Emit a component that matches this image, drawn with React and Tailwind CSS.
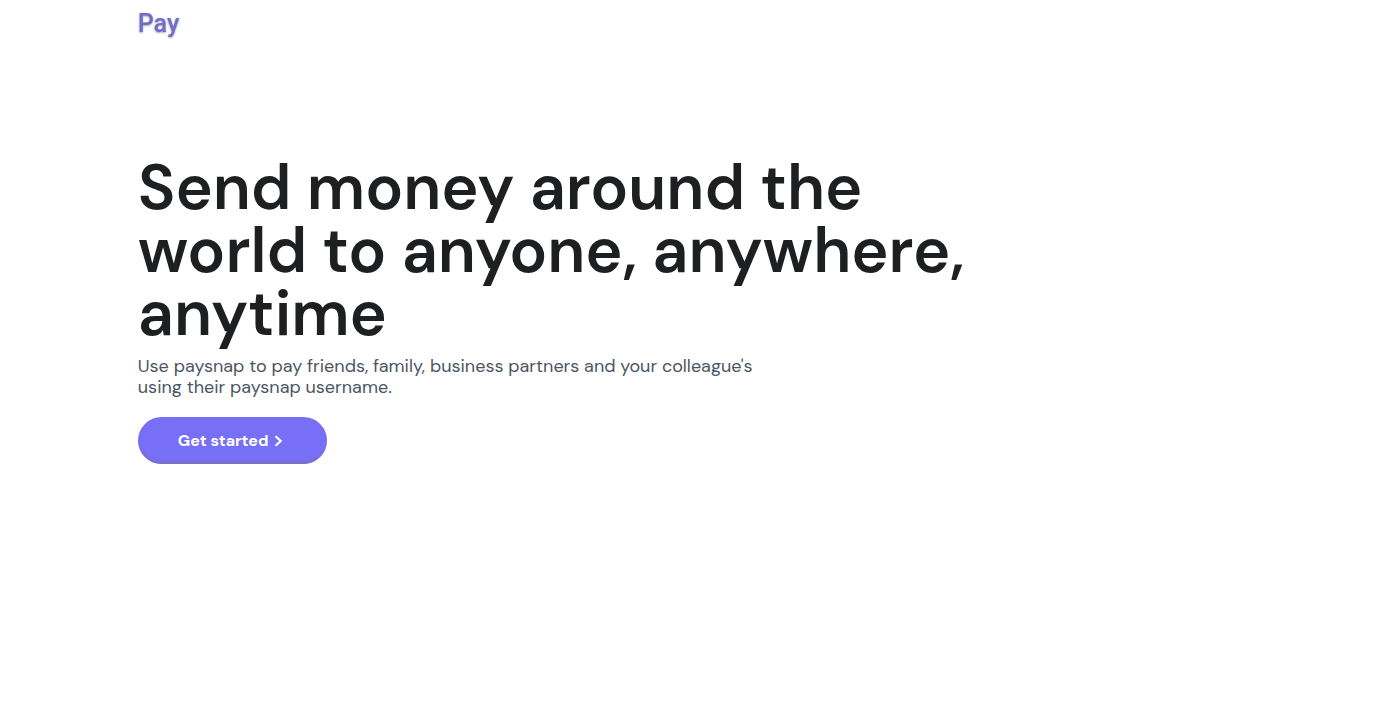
function ChevronIcon() {
  return (
    <svg viewBox="0 0 9 12" className="h-3 w-[9px]" fill="none" stroke="currentColor" strokeWidth="2.2" aria-hidden="true">
      <path d="M1.5 1.3 6.7 6 1.5 10.7" />
    </svg>
  );
}

export default function App() {
  return (
    <div className="min-h-screen bg-white px-[10%] font-['DM_Sans',Inter,sans-serif]">
      <header className="flex h-12 items-center">
        <a
          href="#home"
          className="font-[Roboto,sans-serif] text-[25px] leading-[46px] font-medium text-[#716cc9] [text-shadow:0_1px_2px_rgba(90,80,100,0.5)]"
        >
          Pay
        </a>
      </header>
      <main className="flex flex-col items-start pt-[109px]">
        <h1 className="max-w-[860px] text-[63px] leading-[63px] font-semibold text-[#1d1f20]">
          Send money around the world to anyone, anywhere, anytime
        </h1>
        <p className="mt-2.5 max-w-[660px] text-[18px] leading-[21px] text-[#4b5563]">
          Use paysnap to pay friends, family, business partners and your colleague's using their paysnap username.
        </p>
        <button
          type="button"
          className="mt-[19px] flex h-[47px] items-center gap-1.5 rounded-full bg-[#776ff5] pr-11 pl-10 text-base font-bold text-white shadow-[inset_0_-3px_2px_-1px_rgba(120,110,150,0.6)]"
        >
          Get started
          <ChevronIcon />
        </button>
      </main>
    </div>
  );
}
